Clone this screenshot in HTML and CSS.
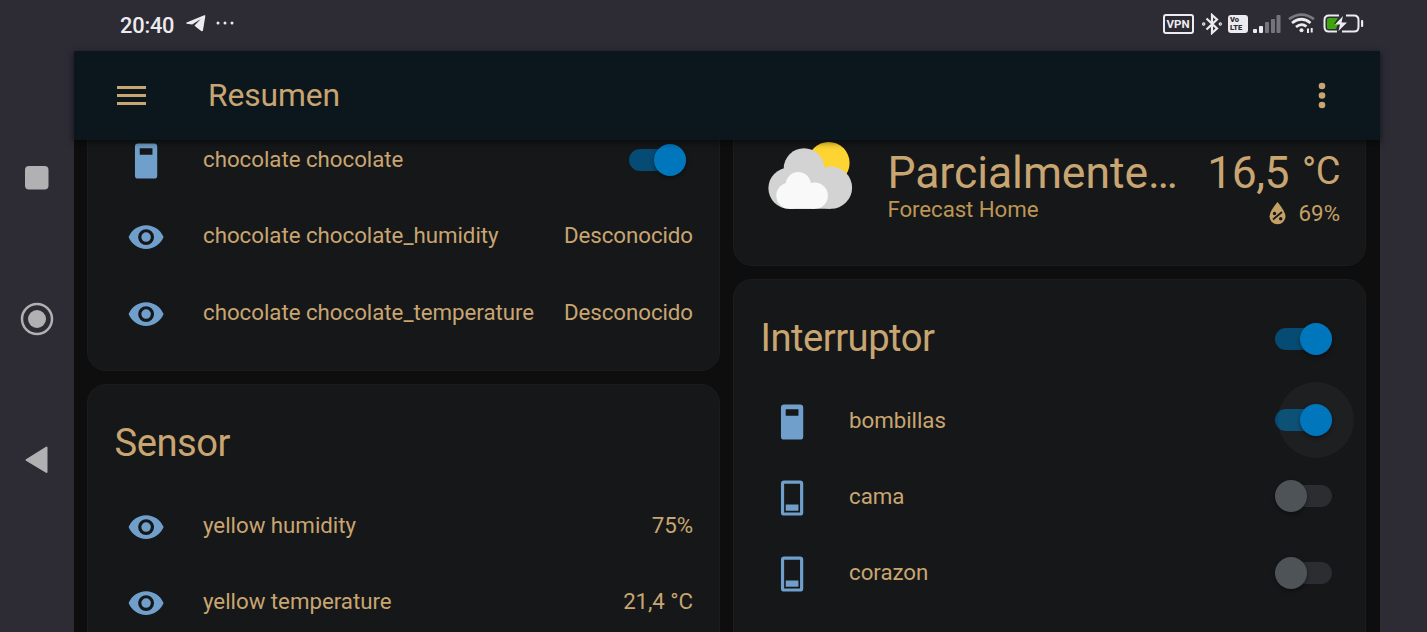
FILE: index.html
```html
<!DOCTYPE html>
<html lang="es">
<head>
<meta charset="utf-8">
<title>Resumen</title>
<link rel="stylesheet" href="styles.css">
</head>
<body>
<svg width="0" height="0" class="defs">
  <symbol id="eye" viewBox="0 0 24 24"><path d="M12,9A3,3 0 0,0 9,12A3,3 0 0,0 12,15A3,3 0 0,0 15,12A3,3 0 0,0 12,9M12,17A5,5 0 0,1 7,12A5,5 0 0,1 12,7A5,5 0 0,1 17,12A5,5 0 0,1 12,17M12,4.5C7,4.5 2.73,7.61 1,12C2.73,16.39 7,19.5 12,19.5C17,19.5 21.27,16.39 23,12C21.27,7.61 17,4.5 12,4.5Z"/></symbol>
  <symbol id="switch-on" viewBox="0 0 24 24"><path fill-rule="evenodd" d="M7 1H17A2 2 0 0 1 19 3V21A2 2 0 0 1 17 23H7A2 2 0 0 1 5 21V3A2 2 0 0 1 7 1ZM8 4V8H16V4Z"/></symbol>
  <symbol id="switch-off" viewBox="0 0 24 24"><path fill-rule="evenodd" d="M7 1H17A2 2 0 0 1 19 3V21A2 2 0 0 1 17 23H7A2 2 0 0 1 5 21V3A2 2 0 0 1 7 1ZM7 3V21H17V3ZM8 16H16V20H8Z"/></symbol>
</svg>
<div class="phone">
  <header class="status">
    <span class="clock">20:40</span>
    <svg class="telegram" width="20" height="17" viewBox="0 0 20 17"><path d="M.6 7.6 18.2.3C19 0 19.5.4 19.3 1.3L17 15.3C16.8 16.3 16 16.5 15.200 15.9L10.300 12.300 8.500 10.600 14.800 4 6.200 9.600.8 8.800C.1 8.600.1 7.900.6 7.600Z"/></svg>
    <svg class="more" width="18" height="4" viewBox="0 0 18 4"><circle cx="2" cy="2" r="1.5"/><circle cx="9" cy="2" r="1.5"/><circle cx="16" cy="2" r="1.5"/></svg>
    <span class="vpn">VPN</span>
    <svg class="bluetooth" width="20" height="22" viewBox="0 0 20 22" fill="none" stroke="#ececf0" stroke-width="2.200"><path d="M4.500 5.500 15 15.500 10 20V2L15 6.500 4.500 16.500"/><circle cx="1.700" cy="11" r=".6"/><circle cx="18.300" cy="11" r=".6"/></svg>
    <span class="volte"><span>Vo</span><span>LTE</span></span>
    <svg class="signal" width="28" height="18" viewBox="0 0 28 18"><g><rect y="14" width="4" height="4" rx="1"/><rect x="6" y="11" width="4" height="7" rx="1"/></g><g opacity=".38"><rect x="12" y="7" width="4" height="11" rx="1"/><rect x="18" y="4" width="4" height="14" rx="1"/><rect x="23.500" width="4" height="18" rx="1"/></g></svg>
    <svg class="wifi" width="27" height="21" viewBox="0 0 27 21" fill="none" stroke="#ececf0" stroke-width="2.700"><path d="M1 6.200Q13.500-3 26 6.200" opacity=".4"/><path d="M4 10Q13.500 2.500 22.500 10M8 14Q13.500 9.500 18.500 13.500"/><circle cx="13.500" cy="17.200" r="2" fill="#ececf0" stroke="none"/><path d="M20 20V15.500M23.700 15V19.500" stroke-width="2"/></svg>
    <svg class="battery" width="41" height="19" viewBox="0 0 41 19"><path d="M16 1.500H6Q1.500 1.500 1.500 6V13Q1.500 17.500 6 17.500H14M23 1.500H31Q35.500 1.500 35.500 6V13Q35.500 17.500 31 17.500H19" fill="none" stroke="#ececf0" stroke-width="2"/><path d="M5.500 4H15L11 10H15L13 15H5.500Q4 15 4 13.500V5.500Q4 4 5.500 4Z" fill="#3fa50c"/><path d="M20 2 12 10.500H17L15.500 17 24 8.500H18.500Z"/><rect x="38" y="6" width="2.200" height="7" rx="1"/></svg>
  </header>
  <div class="main">
    <nav class="nav">
      <svg width="34" height="300" viewBox="0 0 34 300"><rect x="5" y="4" width="23.500" height="23.500" rx="4"/><circle cx="17" cy="157" r="15" fill="none" stroke="#b1b1b3" stroke-width="2.500"/><circle cx="17" cy="157" r="9"/><path d="M6.500 298 26.500 285.500V310Z" class="back"/></svg>
    </nav>
    <div class="app">
      <div class="toolbar">
        <svg width="29" height="20" viewBox="0 0 29 20"><path d="M0 0H29V3H0ZM0 8H29V11H0ZM0 16H29V19H0Z"/></svg>
        <h1>Resumen</h1>
        <svg class="dots" width="8" height="28" viewBox="0 0 8 28"><circle cx="4" cy="4" r="3.300"/><circle cx="4" cy="13.500" r="3.300"/><circle cx="4" cy="23" r="3.300"/></svg>
      </div>
      <div class="view">
        <div class="column">
          <section class="card card-scrolled">
            <div class="row"><svg class="icon"><use href="#switch-on"/></svg><span class="name">chocolate chocolate</span><span class="toggle on"></span></div>
            <div class="row"><svg class="icon"><use href="#eye"/></svg><span class="name">chocolate chocolate_humidity</span><span class="value">Desconocido</span></div>
            <div class="row"><svg class="icon"><use href="#eye"/></svg><span class="name">chocolate chocolate_temperature</span><span class="value">Desconocido</span></div>
          </section>
          <section class="card grow">
            <div class="title"><h2>Sensor</h2></div>
            <div class="row"><svg class="icon"><use href="#eye"/></svg><span class="name">yellow humidity</span><span class="value">75%</span></div>
            <div class="row"><svg class="icon"><use href="#eye"/></svg><span class="name">yellow temperature</span><span class="value">21,4 °C</span></div>
          </section>
        </div>
        <div class="column">
          <section class="card weather">
            <svg class="forecast" width="86" height="68" viewBox="0 0 86 68"><circle cx="60.700" cy="20.900" r="20.900" fill="#fdd432"/><g fill="#d3d3d3"><circle cx="36" cy="26.500" r="20.300"/><circle cx="21" cy="46.200" r="20.600"/><circle cx="63" cy="45.700" r="21.100"/><path d="M21 30H63V66.800H21Z"/></g><g fill="#f9f9f9"><circle cx="30.300" cy="42.700" r="12.600"/><circle cx="21.500" cy="53.600" r="13.200"/><circle cx="46.800" cy="53.700" r="13.100"/><path d="M21.500 46H46.800V66.800H21.500Z"/></g></svg>
            <div class="condition"><div class="state">Parcialmente…</div><div class="place">Forecast Home</div></div>
            <div class="measure">
              <div class="temp">16,5<span class="unit">°C</span></div>
              <div class="humidity"><svg width="17" height="23" viewBox="0 0 17 23"><path d="M8.500 0Q16.500 9.500 16.500 14.500A8 7.800 0 0 1 .5 14.500Q.5 9.500 8.500 0Z"/><g fill="none" stroke="#151719" stroke-width="1.700"><path d="M4 17.500 13 10"/><circle cx="5.500" cy="11.500" r=".9"/><circle cx="11.700" cy="16.700" r=".9"/></g></svg>69%</div>
            </div>
          </section>
          <section class="card grow">
            <div class="title"><h2>Interruptor</h2><span class="toggle on"></span></div>
            <div class="row"><svg class="icon"><use href="#switch-on"/></svg><span class="name">bombillas</span><span class="toggle on ripple"></span></div>
            <div class="row"><svg class="icon"><use href="#switch-off"/></svg><span class="name">cama</span><span class="toggle"></span></div>
            <div class="row"><svg class="icon"><use href="#switch-off"/></svg><span class="name">corazon</span><span class="toggle"></span></div>
          </section>
        </div>
      </div>
    </div>
  </div>
</div>
</body>
</html>
```
FILE: styles.css
```css
* { box-sizing: border-box; }
body { margin: 0; background: #2d2b34; font-family: Roboto, sans-serif; color: #c9a571; }
h1, h2 { margin: 0; font-weight: 400; }
svg { display: block; flex: none; }
.defs { position: absolute; }
.phone { height: 632px; display: flex; flex-direction: column; overflow: hidden; }

.status { height: 51px; flex: none; display: flex; align-items: center; padding: 0 63.500px 4px 120px; color: #ececf0; fill: #ececf0; }
.clock { font-size: 21.800px; font-weight: 500; width: 66px; padding-top: 3px; letter-spacing: -.2px; }
.more { margin-left: 10px; margin-right: auto; margin-top: -2px; }
.vpn { width: 31px; height: 20px; border: 2px solid #ececf0; border-radius: 3px; font-size: 11.500px; line-height: 16px; font-weight: 700; text-align: center; }
.bluetooth { margin-left: 8px; }
.volte { width: 20px; height: 18px; margin-left: 6px; border-radius: 3px; background: #ececf0; color: #2d2b34; font-size: 7.500px; line-height: 8px; font-weight: 900; padding: 1px 2px 0 2.500px; display: flex; flex-direction: column; }
.signal { margin-left: 5px; }
.wifi { margin-left: 7px; }
.battery { margin-left: 8px; }

.main { flex: 1; min-height: 0; display: flex; padding-right: 47px; }
.nav { width: 74px; flex: none; padding: 111px 0 0 20px; fill: #b1b1b3; }
.nav svg { overflow: visible; }
.back { stroke: #b1b1b3; stroke-width: 2px; stroke-linejoin: round; }

.app { flex: 1; min-width: 0; display: flex; flex-direction: column; background: #0e0e0e; }
.toolbar { position: relative; height: 89px; flex: none; display: flex; align-items: center; padding: 0 54px 0 43px; background: #0c171d; fill: #c9a571; box-shadow: 0 2px 7px rgba(0, 0, 0, .6); z-index: 1; }
.toolbar h1 { flex: 1; margin-left: 62px; margin-top: -1px; font-size: 31.800px; letter-spacing: -.1px; }
.view { flex: 1; min-height: 0; overflow: hidden; display: grid; grid-template-columns: 633px 633px; column-gap: 13px; padding-left: 13px; }
.column { display: flex; flex-direction: column; gap: 13.500px; min-height: 0; }

.card { flex: none; background: #151719; border: 1px solid #1b1c1e; border-radius: 19px; }
.card-scrolled { margin-top: -19.500px; height: 250px; }
.grow { height: 440px; }
.title { height: 102px; display: flex; align-items: center; justify-content: space-between; padding: 16px 33.400px 0 26.500px; }
.title h2 { font-size: 38.200px; letter-spacing: -.5px; margin-top: -2px; }
.row { height: 76.300px; display: flex; align-items: center; padding: 0 26px 0 38.500px; font-size: 22.300px; white-space: nowrap; }
.icon { width: 38.200px; height: 38.200px; fill: #6f9fca; margin: 3px 38.300px 0 0; }
.name { flex: 1; margin-top: -1px; letter-spacing: -.03px; }
.value { margin-top: -1px; letter-spacing: -.07px; }

.toggle { position: relative; width: 57px; height: 22px; border-radius: 11px; background: #2b2d31; }
.row .toggle { margin-right: 7.400px; }
.toggle::after { content: ""; position: absolute; left: 0; top: -5px; width: 32px; height: 32px; border-radius: 50%; background: #4d5357; box-shadow: 0 2px 4px rgba(0, 0, 0, .4); }
.toggle.on { background: #064b73; }
.toggle.on::after { left: 25px; background: #0076bd; }
.ripple::before { content: ""; position: absolute; left: 3px; top: -27px; width: 76px; height: 76px; border-radius: 50%; background: rgba(255, 255, 255, .035); }

.weather { margin-top: -18px; height: 143.500px; display: flex; padding: 19px 25px 0 34.400px; }
.forecast { margin-right: 33px; }
.condition { flex: 1; min-width: 0; }
.state { font-size: 44.500px; line-height: 52px; margin-top: 5px; letter-spacing: -.05px; white-space: nowrap; }
.place { font-size: 22.300px; line-height: 26px; margin-top: -3px; letter-spacing: -.08px; color: #bd9555; }
.measure { margin-left: 24px; text-align: right; }
.temp { font-size: 44.500px; line-height: 52px; margin-top: 5px; display: flex; letter-spacing: -.5px; }
.unit { font-size: 38px; line-height: 48px; margin-left: 13px; }
.humidity { display: flex; justify-content: flex-end; align-items: center; gap: 13px; font-size: 22.300px; line-height: 26px; margin-top: 1px; color: #c4a065; fill: #c4a065; }
```
